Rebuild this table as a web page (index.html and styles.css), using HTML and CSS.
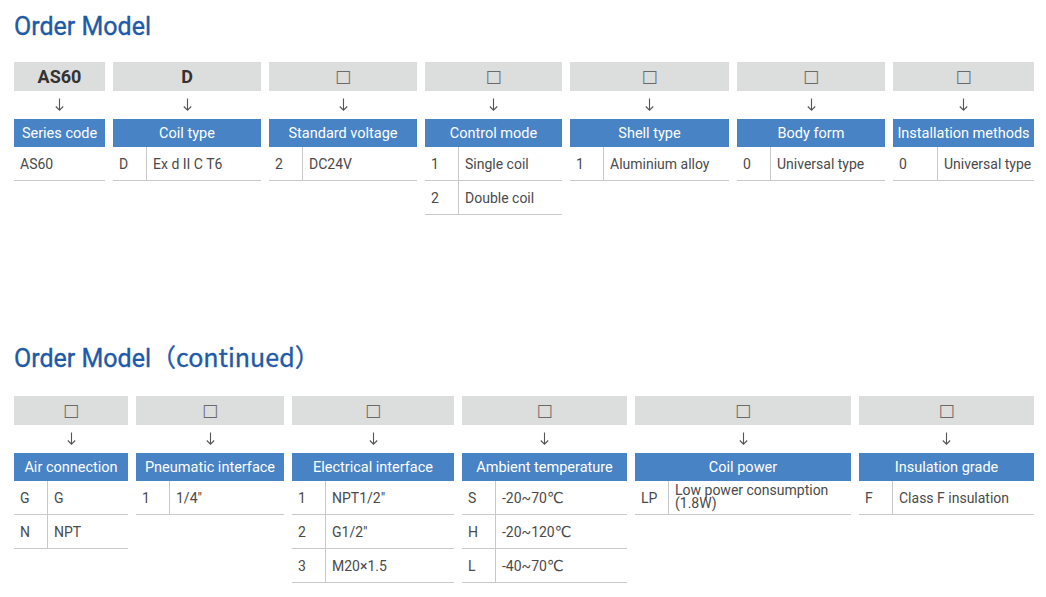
FILE: index.html
```html
<!DOCTYPE html>
<html lang="en">
<head>
<meta charset="utf-8">
<title>Order Model</title>
<link rel="stylesheet" href="styles.css">
</head>
<body>
<section class="section s1">
  <h2 class="title">Order Model</h2>
  <div class="grid g1">
    <div class="col">
      <div class="code-box bold">AS60</div>
      <div class="arrow"><svg viewBox="0 0 9 13" width="9" height="13"><path d="M4.5 0.5V12.2M0.8 8.5L4.5 12.2L8.2 8.5"/></svg></div>
      <div class="head">Series code</div>
      <div class="row single"><span class="v">AS60</span></div>
    </div>
    <div class="col">
      <div class="code-box bold">D</div>
      <div class="arrow"><svg viewBox="0 0 9 13" width="9" height="13"><path d="M4.5 0.5V12.2M0.8 8.5L4.5 12.2L8.2 8.5"/></svg></div>
      <div class="head">Coil type</div>
      <div class="row"><span class="k">D</span><span class="v">Ex d II C T6</span></div>
    </div>
    <div class="col">
      <div class="code-box"><span class="sq">□</span></div>
      <div class="arrow"><svg viewBox="0 0 9 13" width="9" height="13"><path d="M4.5 0.5V12.2M0.8 8.5L4.5 12.2L8.2 8.5"/></svg></div>
      <div class="head">Standard voltage</div>
      <div class="row"><span class="k">2</span><span class="v">DC24V</span></div>
    </div>
    <div class="col">
      <div class="code-box"><span class="sq">□</span></div>
      <div class="arrow"><svg viewBox="0 0 9 13" width="9" height="13"><path d="M4.5 0.5V12.2M0.8 8.5L4.5 12.2L8.2 8.5"/></svg></div>
      <div class="head">Control mode</div>
      <div class="row"><span class="k">1</span><span class="v">Single coil</span></div>
      <div class="row"><span class="k">2</span><span class="v">Double coil</span></div>
    </div>
    <div class="col">
      <div class="code-box"><span class="sq">□</span></div>
      <div class="arrow"><svg viewBox="0 0 9 13" width="9" height="13"><path d="M4.5 0.5V12.2M0.8 8.5L4.5 12.2L8.2 8.5"/></svg></div>
      <div class="head">Shell type</div>
      <div class="row"><span class="k">1</span><span class="v">Aluminium alloy</span></div>
    </div>
    <div class="col">
      <div class="code-box"><span class="sq">□</span></div>
      <div class="arrow"><svg viewBox="0 0 9 13" width="9" height="13"><path d="M4.5 0.5V12.2M0.8 8.5L4.5 12.2L8.2 8.5"/></svg></div>
      <div class="head">Body form</div>
      <div class="row"><span class="k">0</span><span class="v">Universal type</span></div>
    </div>
    <div class="col wide-key">
      <div class="code-box"><span class="sq">□</span></div>
      <div class="arrow"><svg viewBox="0 0 9 13" width="9" height="13"><path d="M4.5 0.5V12.2M0.8 8.5L4.5 12.2L8.2 8.5"/></svg></div>
      <div class="head">Installation methods</div>
      <div class="row"><span class="k">0</span><span class="v">Universal type</span></div>
    </div>
  </div>
</section>

<section class="section s2">
  <h2 class="title">Order Model<span class="paren">（continued）</span></h2>
  <div class="grid g2">
    <div class="col">
      <div class="code-box"><span class="sq">□</span></div>
      <div class="arrow"><svg viewBox="0 0 9 13" width="9" height="13"><path d="M4.5 0.5V12.2M0.8 8.5L4.5 12.2L8.2 8.5"/></svg></div>
      <div class="head">Air connection</div>
      <div class="row"><span class="k">G</span><span class="v">G</span></div>
      <div class="row"><span class="k">N</span><span class="v">NPT</span></div>
    </div>
    <div class="col">
      <div class="code-box"><span class="sq">□</span></div>
      <div class="arrow"><svg viewBox="0 0 9 13" width="9" height="13"><path d="M4.5 0.5V12.2M0.8 8.5L4.5 12.2L8.2 8.5"/></svg></div>
      <div class="head">Pneumatic interface</div>
      <div class="row"><span class="k">1</span><span class="v">1/4"</span></div>
    </div>
    <div class="col">
      <div class="code-box"><span class="sq">□</span></div>
      <div class="arrow"><svg viewBox="0 0 9 13" width="9" height="13"><path d="M4.5 0.5V12.2M0.8 8.5L4.5 12.2L8.2 8.5"/></svg></div>
      <div class="head">Electrical interface</div>
      <div class="row"><span class="k">1</span><span class="v">NPT1/2"</span></div>
      <div class="row"><span class="k">2</span><span class="v">G1/2"</span></div>
      <div class="row"><span class="k">3</span><span class="v">M20×1.5</span></div>
    </div>
    <div class="col">
      <div class="code-box"><span class="sq">□</span></div>
      <div class="arrow"><svg viewBox="0 0 9 13" width="9" height="13"><path d="M4.5 0.5V12.2M0.8 8.5L4.5 12.2L8.2 8.5"/></svg></div>
      <div class="head">Ambient temperature</div>
      <div class="row"><span class="k">S</span><span class="v">-20~70<span class="deg">℃</span></span></div>
      <div class="row"><span class="k">H</span><span class="v">-20~120<span class="deg">℃</span></span></div>
      <div class="row"><span class="k">L</span><span class="v">-40~70<span class="deg">℃</span></span></div>
    </div>
    <div class="col">
      <div class="code-box"><span class="sq">□</span></div>
      <div class="arrow"><svg viewBox="0 0 9 13" width="9" height="13"><path d="M4.5 0.5V12.2M0.8 8.5L4.5 12.2L8.2 8.5"/></svg></div>
      <div class="head">Coil power</div>
      <div class="row"><span class="k">LP</span><span class="v narrow">Low power consumption (1.8W)</span></div>
    </div>
    <div class="col">
      <div class="code-box"><span class="sq">□</span></div>
      <div class="arrow"><svg viewBox="0 0 9 13" width="9" height="13"><path d="M4.5 0.5V12.2M0.8 8.5L4.5 12.2L8.2 8.5"/></svg></div>
      <div class="head">Insulation grade</div>
      <div class="row"><span class="k">F</span><span class="v">Class F insulation</span></div>
    </div>
  </div>
</section>
</body>
</html>
```

FILE: styles.css
```css
* { box-sizing: border-box; }

html, body {
  margin: 0;
  padding: 0;
  background: #ffffff;
}

body {
  padding: 0 12px 0 14px;
  font-family: Roboto, "Liberation Sans", "Noto Sans CJK SC", sans-serif;
  color: #444444;
}

.title {
  margin: 9px 0 17px;
  height: 36px;
  line-height: 36px;
  font-size: 25px;
  font-weight: 400;
  -webkit-text-stroke: 0.35px #1f5aa8;
  color: #1f5aa8;
  white-space: nowrap;
}

.paren {
  font-family: "Noto Sans CJK SC", sans-serif;
  font-weight: 400;
}

.s2 {
  margin-top: 123px;
}

.s2 .title {
  margin-bottom: 22px;
}

.grid {
  display: grid;
  column-gap: 8px;
  align-items: start;
}

.g1 {
  grid-template-columns: 91px 148px 148px 137px 159px 148px 141px;
}

.g2 {
  grid-template-columns: 114px 148px 162px 165px 216px 175px;
}

.col {
  display: flex;
  flex-direction: column;
}

.code-box {
  height: 29px;
  background: #dcdddd;
  display: flex;
  align-items: center;
  justify-content: center;
  font-size: 17px;
  color: #333333;
}

.code-box.bold {
  font-weight: 700;
  font-size: 18px;
}

.sq {
  font-family: "DejaVu Sans", sans-serif;
  font-size: 17px;
  color: #6a6a6a;
  line-height: 1;
}

.arrow {
  height: 28px;
  display: flex;
  align-items: center;
  justify-content: center;
  padding-bottom: 1px;
}

.arrow svg {
  display: block;
  fill: none;
  stroke: #555555;
  stroke-width: 1.1;
}

.head {
  height: 28px;
  background: #4883c5;
  color: #ffffff;
  font-size: 14.5px;
  display: flex;
  align-items: center;
  justify-content: center;
  white-space: nowrap;
}

.row {
  height: 34px;
  display: flex;
  border-bottom: 1px solid #c9c9c9;
  font-size: 14px;
  line-height: 17px;
  color: #4a4a4a;
}

.row .k {
  flex: 0 0 34px;
  border-right: 1px solid #c9c9c9;
  display: flex;
  align-items: center;
  padding: 2px 0 0 6px;
}

.wide-key .row .k {
  flex-basis: 45px;
}

.row .v {
  flex: 1;
  display: flex;
  align-items: center;
  padding: 2px 0 0 6px;
  white-space: nowrap;
}

.deg {
  font-family: "DejaVu Sans", sans-serif;
  font-size: 15px;
  letter-spacing: -0.5px;
}

.row .v.narrow {
  white-space: normal;
  line-height: 13px;
  padding: 0 4px 1px 6px;
}
```
